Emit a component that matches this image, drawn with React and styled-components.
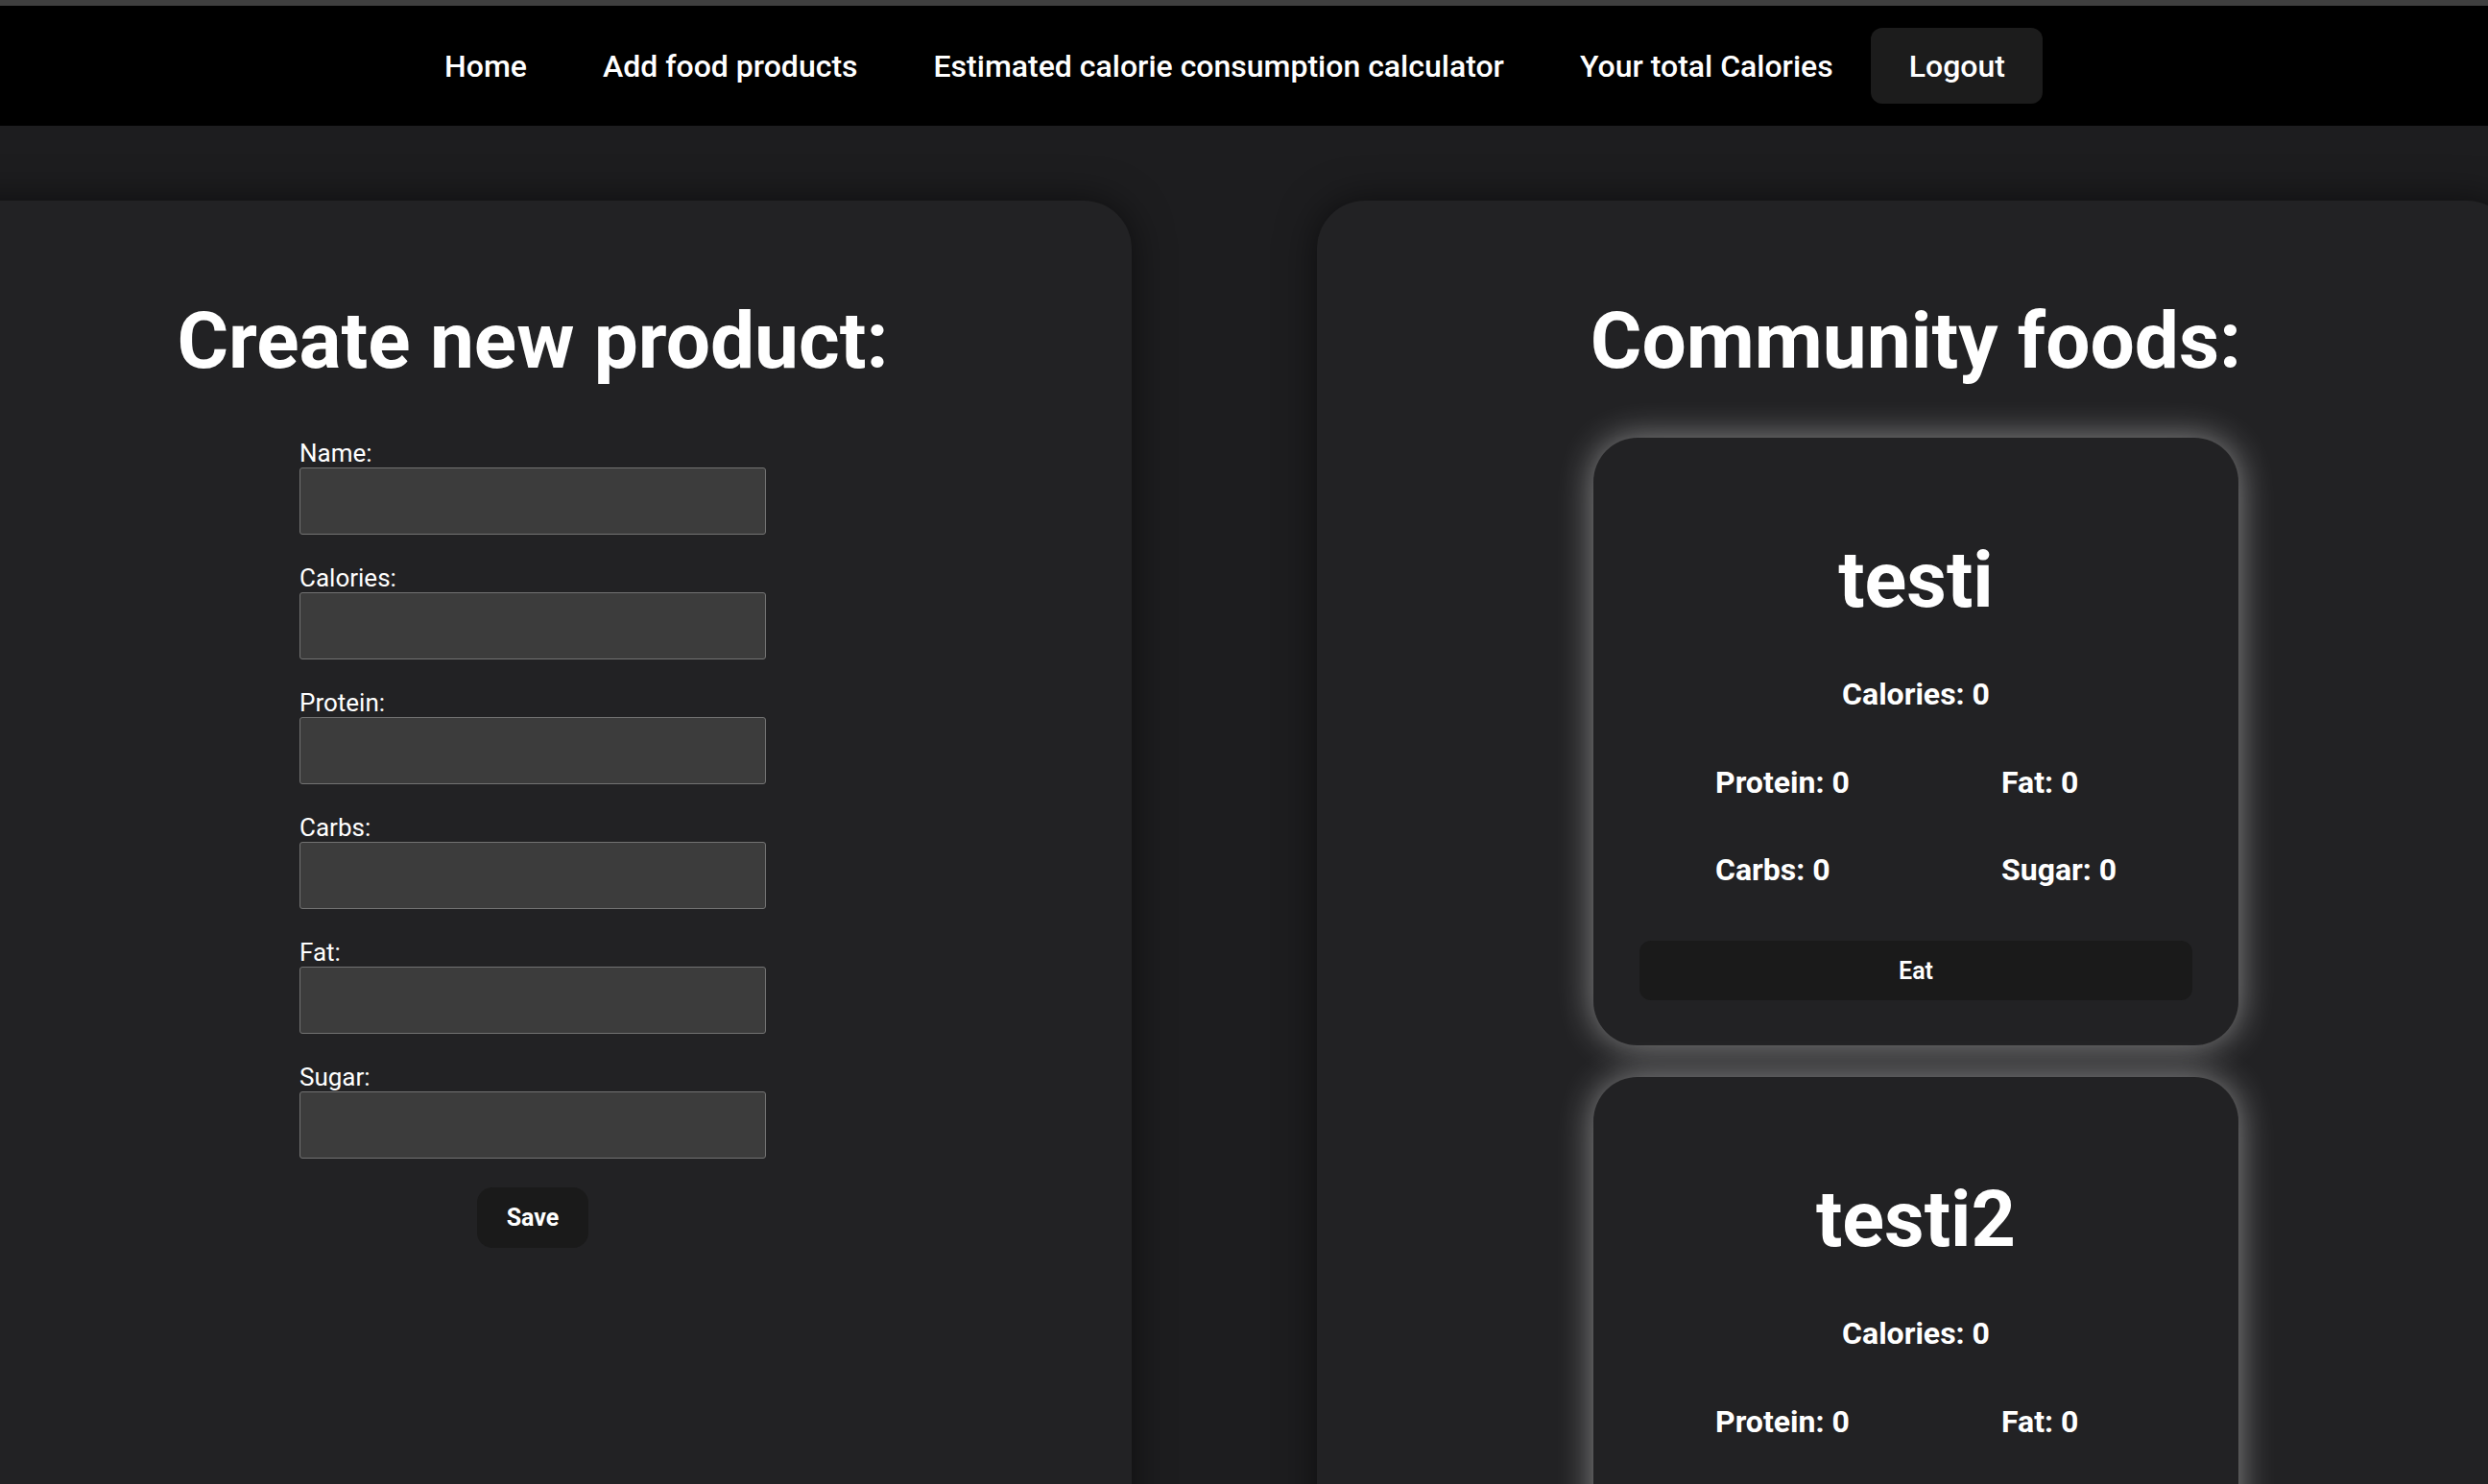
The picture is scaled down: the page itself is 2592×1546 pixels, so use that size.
import styled, { createGlobalStyle } from "styled-components";

const GlobalStyle = createGlobalStyle`
  html, body {
    margin: 0;
    padding: 0;
    overflow: hidden;
    background: #1d1d1f;
    color: #fff;
    font-family: Roboto, "Liberation Sans", sans-serif;
  }
  * {
    box-sizing: border-box;
  }
`;

const fields = ["Name", "Calories", "Protein", "Carbs", "Fat", "Sugar"];

const foods = [
  { id: 1, name: "testi", calories: 0, protein: 0, fat: 0, carbs: 0, sugar: 0 },
  { id: 2, name: "testi2", calories: 0, protein: 0, fat: 0, carbs: 0, sugar: 0 },
];

const links = [
  "Home",
  "Add food products",
  "Estimated calorie consumption calculator",
  "Your total Calories",
];

export default function App() {
  return (
    <>
      <GlobalStyle />
      <TopStrip />
      <Nav>
        {links.map((l) => (
          <NavItem key={l}>{l}</NavItem>
        ))}
        <NavItem active>Logout</NavItem>
      </Nav>
      <Main>
        <Panel>
          <Heading>Create new product:</Heading>
          <Form onSubmit={(e) => e.preventDefault()}>
            {fields.map((f) => (
              <Field key={f}>
                <Label htmlFor={f}>{f}:</Label>
                <Input id={f} type="text" />
              </Field>
            ))}
            <SaveButton type="submit">Save</SaveButton>
          </Form>
        </Panel>
        <Panel>
          <Heading>Community foods:</Heading>
          <CardList>
            {foods.map((food) => (
              <FoodCard key={food.id}>
                <FoodName>{food.name}</FoodName>
                <Stat>Calories: {food.calories}</Stat>
                <StatGrid>
                  <Stat>Protein: {food.protein}</Stat>
                  <Stat>Fat: {food.fat}</Stat>
                  <Stat>Carbs: {food.carbs}</Stat>
                  <Stat>Sugar: {food.sugar}</Stat>
                </StatGrid>
                <EatButton>Eat</EatButton>
              </FoodCard>
            ))}
          </CardList>
        </Panel>
      </Main>
    </>
  );
}

const TopStrip = styled.div`
  height: 6px;
  background: #3f3f3f;
`;

const Nav = styled.nav`
  display: flex;
  justify-content: center;
  align-items: center;
  height: 125px;
  padding-right: 40px;
  background: #000;
`;

const NavItem = styled.button`
  height: 79px;
  padding: 0 39.5px;
  border: none;
  border-radius: 12px;
  background: ${(props) => (props.active ? "#1c1c1c" : "transparent")};
  color: #fff;
  font-family: inherit;
  font-size: 32px;
  font-weight: 500;
  cursor: pointer;
`;

const Main = styled.main`
  display: flex;
  align-items: stretch;
  gap: 193px;
  margin-left: -69px;
  padding-top: 78px;
`;

const Panel = styled.section`
  flex-shrink: 0;
  display: flex;
  flex-direction: column;
  align-items: center;
  width: 1248px;
  padding: 98px 0 200px;
  border-radius: 50px;
  background: #222224;
  box-shadow: 0 0 40px rgba(0, 0, 0, 0.55);
`;

const Heading = styled.h1`
  margin: 0;
  font-size: 82px;
  font-weight: 700;
`;

const Form = styled.form`
  display: flex;
  flex-direction: column;
  align-items: center;
  width: 486px;
  margin-top: 54px;
`;

const Field = styled.div`
  width: 100%;
  margin-bottom: 30px;
`;

const Label = styled.label`
  display: block;
  font-size: 26px;
  line-height: 30px;
`;

const Input = styled.input`
  display: block;
  width: 100%;
  height: 70px;
  border: 1px solid #727272;
  border-radius: 3px;
  background: #3c3c3c;
  color: #fff;
  font-family: inherit;
  font-size: 26px;
  padding: 0 12px;
`;

const SaveButton = styled.button`
  height: 63px;
  padding: 0 31px;
  border: none;
  border-radius: 16px;
  background: #1a1a1a;
  color: #fff;
  font-family: inherit;
  font-size: 25px;
  font-weight: 700;
  cursor: pointer;
`;

const CardList = styled.div`
  display: flex;
  flex-direction: column;
  gap: 33px;
  margin-top: 53px;
`;

const FoodCard = styled.article`
  display: flex;
  flex-direction: column;
  align-items: center;
  width: 672px;
  padding: 101px 48px 47px;
  border-radius: 46px;
  background: #222224;
  box-shadow: 0 0 36px rgba(255, 255, 255, 0.48);
`;

const FoodName = styled.h2`
  margin: 0 0 52px;
  font-size: 81px;
  font-weight: 700;
`;

const Stat = styled.p`
  margin: 0;
  font-size: 32px;
  font-weight: 700;
`;

const StatGrid = styled.div`
  display: grid;
  grid-template-columns: 298px 298px;
  row-gap: 53px;
  align-self: stretch;
  padding-left: 79px;
  margin: 54px 0 55px;
`;

const EatButton = styled.button`
  width: 100%;
  height: 62px;
  border: none;
  border-radius: 12px;
  background: #1a1a1a;
  color: #fff;
  font-family: inherit;
  font-size: 25px;
  font-weight: 600;
  cursor: pointer;
`;
